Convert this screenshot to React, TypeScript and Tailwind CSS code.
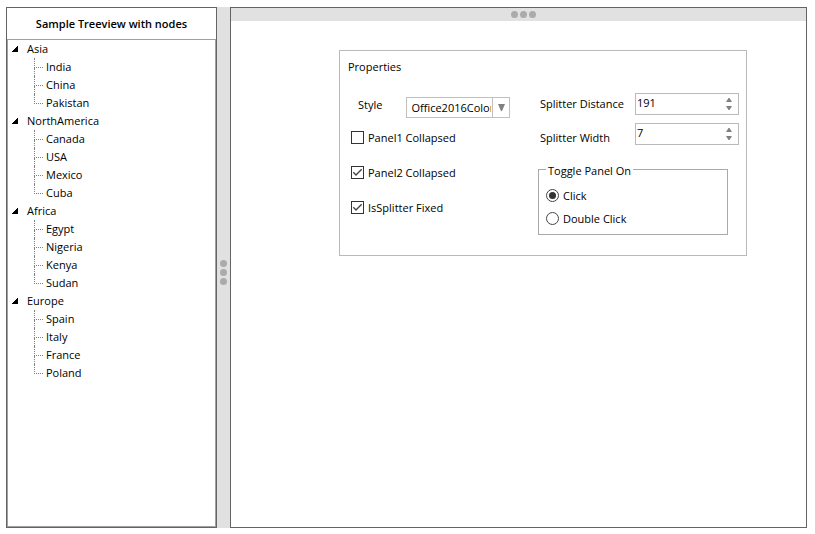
import { useState } from "react";
import type { ReactNode } from "react";
import clsx from "clsx";

interface TreeNode {
  name: string;
  children: string[];
}

const regions: TreeNode[] = [
  { name: "Asia", children: ["India", "China", "Pakistan"] },
  { name: "NorthAmerica", children: ["Canada", "USA", "Mexico", "Cuba"] },
  { name: "Africa", children: ["Egypt", "Nigeria", "Kenya", "Sudan"] },
  { name: "Europe", children: ["Spain", "Italy", "France", "Poland"] },
];

function TreeGroup({ node }: { node: TreeNode }) {
  const [open, setOpen] = useState(true);

  return (
    <li>
      <button
        type="button"
        aria-expanded={open}
        onClick={() => setOpen(!open)}
        className="flex h-[18px] items-center pl-[3px]"
      >
        <svg
          viewBox="0 0 7 7"
          className={clsx("mr-[9px] mb-[2px] h-[7px] w-[7px]", !open && "-rotate-45")}
          shapeRendering="crispEdges"
          aria-hidden="true"
        >
          <path d="M7 0V7H0Z" fill="#000" />
        </svg>
        {node.name}
      </button>
      {open && (
        <ul className="pl-[26px]">
          {node.children.map((child, i) => (
            <li key={child} className="flex h-[18px] items-center">
              {/* Connector lines */}
              <span className="mr-[3px] flex h-[18px] w-[9px] flex-col">
                <span className="h-[10px] border-b border-l border-dotted border-[#808080]" />
                {i < node.children.length - 1 && (
                  <span className="flex-1 border-l border-dotted border-[#808080]" />
                )}
              </span>
              {child}
            </li>
          ))}
        </ul>
      )}
    </li>
  );
}

function GripDots() {
  return (
    <>
      <span className="h-[7px] w-[7px] rounded-full bg-[#ababab]" />
      <span className="h-[7px] w-[7px] rounded-full bg-[#ababab]" />
      <span className="h-[7px] w-[7px] rounded-full bg-[#ababab]" />
    </>
  );
}

function CheckBox({ label, checked = false }: { label: string; checked?: boolean }) {
  return (
    <label className="flex h-[35px] items-center gap-1">
      <span className="relative h-[13px] w-[13px]">
        <input
          type="checkbox"
          defaultChecked={checked}
          className="peer block h-[13px] w-[13px] appearance-none border border-[#333] bg-white"
        />
        <svg
          viewBox="0 0 13 13"
          className="pointer-events-none invisible absolute inset-0 peer-checked:visible"
          aria-hidden="true"
        >
          <path d="M2.3 6.3L5 9L10.7 3.3" fill="none" stroke="#444" strokeWidth="1.4" />
        </svg>
      </span>
      {label}
    </label>
  );
}

function RadioOption({ label, checked = false }: { label: string; checked?: boolean }) {
  return (
    <label className="flex h-[23px] items-center gap-1">
      <span className="relative h-[13px] w-[13px]">
        <input
          type="radio"
          name="togglePanel"
          defaultChecked={checked}
          className="peer block h-[13px] w-[13px] appearance-none rounded-full border border-[#444] bg-white"
        />
        <span className="pointer-events-none invisible absolute inset-[3px] rounded-full bg-[#333] peer-checked:visible" />
      </span>
      {label}
    </label>
  );
}

interface SpinnerProps {
  id: string;
  label: string;
  initial: number;
  labelClass?: string;
}

function Spinner({ id, label, initial, labelClass }: SpinnerProps) {
  const [value, setValue] = useState(initial);

  return (
    <div className="flex h-[22px] items-center justify-between">
      <label htmlFor={id} className={clsx("pl-[2px]", labelClass)}>
        {label}
      </label>
      <div className="flex h-[22px] w-[104px] border border-[#bababa]">
        <input
          id={id}
          type="text"
          inputMode="numeric"
          value={value}
          onChange={(e) => setValue(Number(e.target.value) || 0)}
          className="min-w-0 flex-1 pb-[2px] pl-px outline-none"
        />
        <div className="flex w-[18px] flex-col items-center justify-center gap-1">
          <button type="button" aria-label={`Increase ${label}`} onClick={() => setValue(value + 1)}>
            <svg viewBox="0 0 6 4" className="h-1 w-[6px]" aria-hidden="true">
              <path d="M0 4L2.5 0H3.5L6 4Z" fill="#808080" />
            </svg>
          </button>
          <button type="button" aria-label={`Decrease ${label}`} onClick={() => setValue(value - 1)}>
            <svg viewBox="0 0 6 4" className="h-1 w-[6px]" aria-hidden="true">
              <path d="M0 0L2.5 4H3.5L6 0Z" fill="#808080" />
            </svg>
          </button>
        </div>
      </div>
    </div>
  );
}

function PropertiesPanel({ children }: { children: ReactNode }) {
  return (
    <section className="w-[408px] border border-[#bababa] pt-2 pr-[7px] pb-5 pl-2">
      <h2 className="leading-4">Properties</h2>
      <div className="mt-[18px] flex justify-between">{children}</div>
    </section>
  );
}

export default function App() {
  return (
    <div className="flex h-screen bg-white pt-[7px] pr-2 pb-[6px] pl-[6px] font-['Open_Sans','Noto_Sans',sans-serif] text-[11px] leading-4 text-black">
      {/* Tree panel */}
      <aside className="flex w-[211px] shrink-0 flex-col border border-[#646464]">
        <h1 className="flex h-[31px] items-center justify-center font-semibold">
          Sample Treeview with nodes
        </h1>
        <ul className="flex-1 overflow-auto border border-[#a0a0a0]">
          {regions.map((node) => (
            <TreeGroup key={node.name} node={node} />
          ))}
        </ul>
      </aside>

      {/* Vertical splitter */}
      <div
        role="separator"
        aria-orientation="vertical"
        className="flex w-[13px] shrink-0 cursor-col-resize flex-col items-center justify-center gap-[2px] bg-[#e1e1e1] pt-[10px]"
      >
        <GripDots />
      </div>

      <main className="flex min-w-0 flex-1 flex-col border border-[#646464]">
        {/* Horizontal splitter */}
        <div
          role="separator"
          className="flex h-[13px] shrink-0 cursor-row-resize items-center justify-center gap-[2px] bg-[#e1e1e1] pl-[10px]"
        >
          <GripDots />
        </div>

        <div className="pt-[29px] pl-[108px]">
          <PropertiesPanel>
            <div className="w-[162px]">
              <div className="flex items-center gap-6 pt-1 pl-[10px]">
                <label htmlFor="style" className="-mt-[6px]">Style</label>
                <div className="relative">
                  <select
                    id="style"
                    className="block h-[21px] w-[104px] appearance-none border border-[#c0c0c0] bg-white pr-[18px] pl-1 leading-4"
                  >
                    <option>Office2016Colorful</option>
                    <option>Office2016White</option>
                    <option>Default</option>
                  </select>
                  <span className="pointer-events-none absolute inset-y-px right-px flex w-[17px] items-center justify-center border-l border-[#c0c0c0] bg-white">
                    <svg viewBox="0 0 7 7" className="h-[7px] w-[7px]" aria-hidden="true">
                      <path d="M0 0H7L4 7H3Z" fill="#808080" />
                    </svg>
                  </span>
                </div>
              </div>
              <div className="pt-[2px] pl-[3px]">
                <CheckBox label="Panel1 Collapsed" />
                <CheckBox label="Panel2 Collapsed" checked />
                <CheckBox label="IsSplitter Fixed" checked />
              </div>
            </div>

            <div className="w-[201px]">
              <div className="flex flex-col gap-2">
                <Spinner id="distance" label="Splitter Distance" initial={191} />
                <Spinner id="width" label="Splitter Width" initial={7} labelClass="pt-2" />
              </div>
              <fieldset className="mt-[14px] mr-[11px] border border-[#a9a9a9] px-[7px] pb-1">
                <legend className="px-[2px] pt-1">Toggle Panel On</legend>
                <div className="pt-[5px]">
                  <RadioOption label="Click" checked />
                  <RadioOption label="Double Click" />
                </div>
              </fieldset>
            </div>
          </PropertiesPanel>
        </div>
      </main>
    </div>
  );
}
